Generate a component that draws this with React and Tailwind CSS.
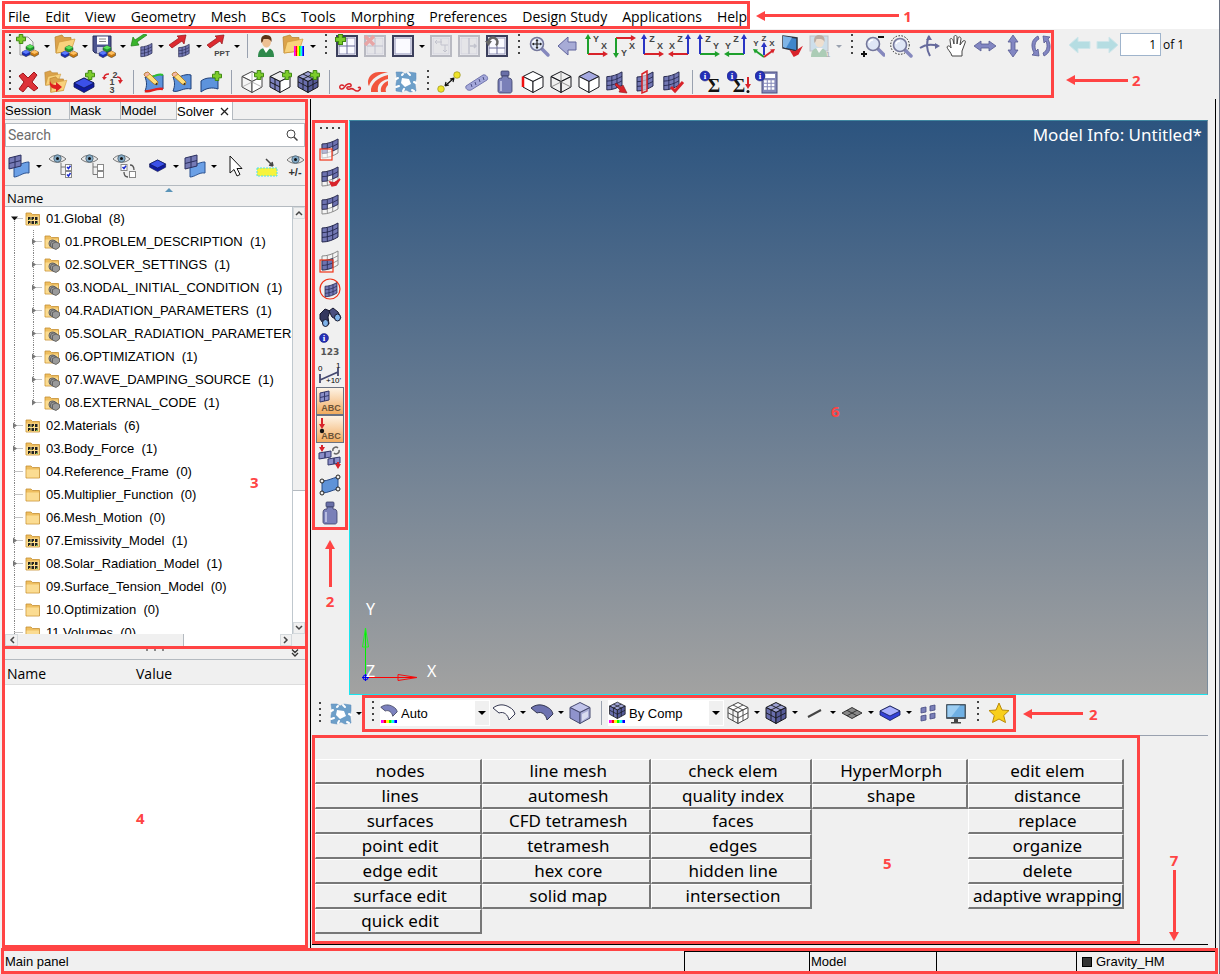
import React from "react";

const MENUS = [
  "File",
  "Edit",
  "View",
  "Geometry",
  "Mesh",
  "BCs",
  "Tools",
  "Morphing",
  "Preferences",
  "Design Study",
  "Applications",
  "Help",
];

const TREE = [
  { name: "01.Global", count: 8, kind: "full", open: true },
  { name: "01.PROBLEM_DESCRIPTION", count: 1, child: true },
  { name: "02.SOLVER_SETTINGS", count: 1, child: true },
  { name: "03.NODAL_INITIAL_CONDITION", count: 1, child: true },
  { name: "04.RADIATION_PARAMETERS", count: 1, child: true },
  { name: "05.SOLAR_RADIATION_PARAMETERS", count: 1, child: true },
  { name: "06.OPTIMIZATION", count: 1, child: true },
  { name: "07.WAVE_DAMPING_SOURCE", count: 1, child: true },
  { name: "08.EXTERNAL_CODE", count: 1, child: true, last: true },
  { name: "02.Materials", count: 6, kind: "full" },
  { name: "03.Body_Force", count: 1, kind: "full" },
  { name: "04.Reference_Frame", count: 0, kind: "empty" },
  { name: "05.Multiplier_Function", count: 0, kind: "empty" },
  { name: "06.Mesh_Motion", count: 0, kind: "empty" },
  { name: "07.Emissivity_Model", count: 1, kind: "full" },
  { name: "08.Solar_Radiation_Model", count: 1, kind: "full" },
  { name: "09.Surface_Tension_Model", count: 0, kind: "empty" },
  { name: "10.Optimization", count: 0, kind: "empty" },
  { name: "11.Volumes", count: 0, kind: "empty" },
];

const PANEL_COLUMNS = [
  ["nodes", "lines", "surfaces", "point edit", "edge edit", "surface edit", "quick edit"],
  ["line mesh", "automesh", "CFD tetramesh", "tetramesh", "hex core", "solid map"],
  ["check elem", "quality index", "faces", "edges", "hidden line", "intersection"],
  ["HyperMorph", "shape"],
  ["edit elem", "distance", "replace", "organize", "delete", "adaptive wrapping"],
];

/* ---------- drawing pieces ---------- */

const Svg = ({ children, className = "" }) => (
  <svg viewBox="0 0 24 24" className={`w-6 h-6 shrink-0 ${className}`} aria-hidden="true">
    {children}
  </svg>
);

const Plus = ({ x = 0, y = 0, s = 1 }) => (
  <path
    transform={`translate(${x} ${y}) scale(${s})`}
    d="M3.2 0.5h3.6v2.7h2.7v3.6h-2.7v2.7h-3.6v-2.7h-2.7v-3.6h2.7z"
    fill="#7ccc2a"
    stroke="#3f8a10"
  />
);

const Brick = ({ x, y, top, side, s = 1 }) => (
  <g transform={`translate(${x} ${y}) scale(${s})`} strokeWidth="0.5">
    <path d="M0 2.5L4 0.5L8 2.5V5L4 7.2L0 5z" fill={side} stroke="#333" />
    <path d="M0 2.5L4 0.5L8 2.5L4 4.6z" fill={top} />
  </g>
);

const Balls = ({ x = 7, y = 10 }) => (
  <g transform={`translate(${x} ${y})`}>
    <Brick x={4} y={0} top="#5be05b" side="#1c9a2c" />
    <Brick x={0} y={5.5} top="#5a7bff" side="#1a2fb8" />
    <Brick x={8.5} y={5.5} top="#ffc061" side="#c97a12" />
  </g>
);

const Folder = ({ x = 0, y = 0, s = 1 }) => (
  <g transform={`translate(${x} ${y}) scale(${s})`}>
    <path d="M1 3L8 1L10 3.5H17V17L2 19z" fill="#dba24a" stroke="#b47d28" strokeWidth="0.7" />
    <path d="M5 8L21 5L17 17L2 19z" fill="#f8d27c" stroke="#cf9838" strokeWidth="0.7" />
  </g>
);

const Sheet = ({ fill = "#7378b4", line = "#23264c", x = 0, y = 0, s = 1 }) => (
  <g transform={`translate(${x} ${y}) scale(${s})`}>
    <path d="M4 7C9 7 15 5 20 2V16C15 19 10 21 4 21z" fill={fill} stroke={line} />
    <path
      d="M4 11.7C9 11.7 15 9.700 20 6.700M4 16.400C9 16.400 15 14.400 20 11.400M9.300 6.500V20.500M14.700 4.600V18.700"
      fill="none"
      stroke={line}
      strokeWidth="0.9"
    />
  </g>
);

// only part of the sheet is shaded, the other cells stay open
const HalfSheet = ({ low }) => (
  <g>
    <Sheet fill="#f4f4f4" line="#8a8a8a" />
    <path
      d={
        low
          ? "M4 11.700C8 11.700 11 10.800 14.700 9.500V18.700C11 20 8 21 4 21z"
          : "M4 7C9 7 15 5 20 2V11.400L14.700 14V9.500L9.300 11.200V16L4 16.400z"
      }
      fill="#6d72b0"
      stroke="#23264c"
      strokeWidth="0.8"
    />
    <path
      d={low ? "M4 16.400C8 16.400 11 15.400 14.700 14M9.300 11.500V20.500" : "M4 11.700L9.300 11.200M14.700 9.500L20 6.700M9.300 6.500V11M14.700 4.600V9.500"}
      stroke="#23264c"
      strokeWidth="0.8"
      fill="none"
    />
  </g>
);

const Surface = ({ fill = "#5d93dc" }) => (
  <path d="M3 7C8 9 14 3 21 5V19C14 17 8 23 3 21C5 16 5 12 3 7z" fill={fill} stroke="#1e3f78" />
);

const Pencil = () => (
  <g>
    <path d="M3 3L6 2L16 12L15 15L12 14L2 5z" fill="#ffe07a" stroke="#a86f14" strokeWidth="0.8" />
    <path d="M2 5L3 3L6 2L8 4L4 7z" fill="#f3b6a8" stroke="#a86f14" strokeWidth="0.5" />
    <path d="M13 14.2L15 12.5L15.2 15z" fill="#222" />
  </g>
);

const Cube = ({ top = "none", left = "none", right = "none", grid, line = "#16171c", children }) => (
  <g stroke={line} strokeLinejoin="round">
    <path d="M12 1.5L22 6.5L12 11.5L2 6.5z" fill={top} />
    <path d="M2 6.5L12 11.5V22.5L2 17z" fill={left} />
    <path d="M22 6.5L12 11.5V22.5L22 17z" fill={right} />
    {grid && (
      <path
        d="M7 4L17 9V19.8M17 4L7 9V19.8M2 11.8L12 17L22 11.8"
        fill="none"
        strokeWidth="0.9"
      />
    )}
    {children}
  </g>
);

const Arrow = ({ x1, y1, x2, y2, c, w = 2, h = 3 }) => {
  const angle = (Math.atan2(y2 - y1, x2 - x1) * 180) / Math.PI;
  const len = Math.hypot(x2 - x1, y2 - y1);
  return (
    <g transform={`translate(${x1} ${y1}) rotate(${angle})`} fill={c}>
      <rect x="0" y={-w / 2} width={len - h} height={w} />
      <path d={`M${len} 0L${len - h * 1.7} ${-h}V${h}z`} />
    </g>
  );
};

const Letter = ({ x, y, children, size = 9, fill = "#444" }) => (
  <text x={x} y={y} fontSize={size} fontWeight="700" fill={fill} textAnchor="middle" fontFamily="Liberation Sans, sans-serif">
    {children}
  </text>
);

const RED = "#d8232a";
const GREEN = "#1ea02c";
const BLUE = "#2a35c4";

const Axes = ({ flip, down, v, vc, h, hc }) => {
  const ox = flip ? 20 : 4;
  const oy = down ? 4 : 20;
  return (
    <Svg>
      <Arrow x1={ox} y1={oy} x2={flip ? 0 : 24} y2={oy} c={hc} />
      <Arrow x1={ox} y1={oy} x2={ox} y2={down ? 24 : 0} c={vc} />
      <Letter x={12} y={down ? 22 : 8}>{v}</Letter>
      <Letter x={flip ? 4 : 20} y={15}>{h}</Letter>
    </Svg>
  );
};

const IsoAxes = () => (
  <Svg>
    <Arrow x1={12} y1={21} x2={12} y2={8} c={BLUE} />
    <Arrow x1={12} y1={23} x2={1} y2={15} c={GREEN} h={2.5} />
    <Arrow x1={12} y1={23} x2={23} y2={15} c={RED} h={2.5} />
    <Letter x={12} y={7} size={8}>Z</Letter>
    <Letter x={4} y={12} size={8}>Y</Letter>
    <Letter x={20} y={12} size={8}>X</Letter>
  </Svg>
);

const Lens = ({ x = 10, y = 10, dashed, children }) => (
  <g>
    {dashed && <circle cx={x} cy={y} r="9.3" fill="none" stroke="#222" strokeDasharray="1.5 1.5" />}
    <path d={`M${x + 5} ${y + 5}L${x + 11} ${y + 11}`} stroke="#8588bd" strokeWidth="3.5" strokeLinecap="round" />
    <circle cx={x} cy={y} r="6.5" fill="#dfe6f6" stroke="#74779b" strokeWidth="1.6" />
    <path d={`M${x - 4} ${y - 1}a4 4 0 0 1 4 -3`} fill="none" stroke="#fff" strokeWidth="1.5" />
    {children}
  </g>
);

const Eye = ({ y = 0 }) => (
  <g transform={`translate(0 ${y})`}>
    <path d="M0 5C4 0 12 0 17 5C12 9.500 5 9.500 0 5z" fill="#e9e9e9" stroke="#777" />
    <circle cx="8.500" cy="4.500" r="3.700" fill="#83a9c4" stroke="#4d6576" strokeWidth="0.8" />
    <circle cx="8.500" cy="4.500" r="1.500" fill="#111" />
  </g>
);

const TreeBoxes = ({ checked, swap }) => (
  <g>
    {!swap && <path d="M12 9V20.500H16M12 13H16" fill="none" stroke="#777" />}
    <rect x={swap ? 8 : 16.5} y="10.500" width="6" height="6" fill="#fff" stroke="#888" />
    <rect x={swap ? 16.5 : 16.5} y="17.500" width="6" height="6" fill="#fff" stroke="#888" />
    {(checked || swap) && <path d={swap ? "M9.500 13l1.500 1.500L13 11.800" : "M18 13l1.500 1.500L21.500 11.800"} stroke="#1c2bd0" strokeWidth="1.500" fill="none" />}
    {checked && <path d="M18 20.500l1.500 1.500L21.500 19" stroke="#1c2bd0" strokeWidth="1.500" fill="none" />}
    {swap && <path d="M17 11c3 0 4 2 4 5M15 23c-3 0-4-2-4-5" stroke="#555" fill="none" strokeWidth="1.300" />}
  </g>
);

const Info = ({ x = 6, y = 6, r = 5 }) => (
  <g>
    <circle cx={x} cy={y} r={r} fill="#2530b8" stroke="#11186e" strokeWidth="0.5" />
    <text x={x} y={y + 3.2} fontSize="9" fontWeight="700" fill="#fff" textAnchor="middle" fontFamily="Liberation Serif, serif">
      i
    </text>
  </g>
);

const Pane = ({ dim, children }) => (
  <g opacity={dim ? 0.3 : 1}>
    <rect x="2" y="2" width="20" height="20" fill="#fff" stroke="#3c3f5c" strokeWidth="2" />
    <rect x="4" y="4" width="16" height="16" fill={dim ? "#cfcfd8" : "#fafaff"} stroke="#8f92b8" />
    {children}
  </g>
);

const Monitor = ({ y = 0 }) => (
  <g transform={`translate(0 ${y})`}>
    <rect x="2" y="2" width="20" height="15" rx="1" fill="#4c5a66" />
    <rect x="3.500" y="3.500" width="17" height="11.500" fill="#6fb0e4" />
    <path d="M3.500 3.500H16L7 15H3.500z" fill="#9ccdf2" />
    <path d="M10 17h4v3h-4zM7 20h10v1.500H7z" fill="#444" />
  </g>
);

const Bottle = () => (
  <g stroke="#3b3f68" strokeWidth="0.8">
    <rect x="8" y="1" width="8" height="5" rx="1" fill="#6a70a8" />
    <path d="M9 6h6v2c3 0 4 1 4 4v9c0 1-1 2-2 2H7c-1 0-2-1-2-2v-9c0-3 1-4 4-4z" fill="#7a80b8" />
    <path d="M8 11v10" stroke="#b8bce0" strokeWidth="2" />
  </g>
);

const Slab = ({ top = "#3b50e8", side = "#0f1aa0", y = 0 }) => (
  <g transform={`translate(0 ${y})`} stroke="#101850" strokeWidth="0.8">
    <path d="M2 12L12 7L22 12V16L12 21.500L2 16z" fill={side} />
    <path d="M2 12L12 7L22 12L12 17z" fill={top} />
  </g>
);

const Person = ({ x = 0 }) => (
  <g transform={`translate(${x} 0)`}>
    <path d="M4 23C4 15 8 14 12 14C17 14 20 16 20 23z" fill="#2f8a4c" />
    <path d="M9 14l3 5 4-5z" fill="#fff" />
    <ellipse cx="12.500" cy="7.500" rx="4.500" ry="6" fill="#edc093" />
    <path d="M7.500 9C6 3 9 1 12 1C17 1 18 4 17.500 8C16 4 12 5 9.500 5C9 7 8.500 8 7.500 9z" fill="#5b3417" />
  </g>
);

const Splat = () => (
  <g>
    <path d="M2 2h6l3 2 4-2 7 1v6l-1 4 1 8-6 1-4-2-4 2-6-1v-7l1-5z" fill="#6d9fc9" stroke="#5a8bb8" strokeWidth="0.5" />
    <path d="M8 8l7 1 2 5-6 3-4-4z" fill="#fff" />
    <path d="M2 9l2-1M14 3l2 2M20 12l2 1M9 21l1-2M2 17l3-1M18 20l2 1M9 4l-1 1" stroke="#fff" strokeWidth="2" strokeLinecap="round" />
  </g>
);

const Rainbow = ({ x, y, w = 16, h = 4 }) => (
  <g>
    {["#f0f", "#f00", "#ff0", "#0f0", "#0ff", "#00f"].map((c, i) => (
      <rect key={c} x={x + (i * w) / 6} y={y} width={w / 6} height={h} fill={c} />
    ))}
  </g>
);

const Curved = ({ fill = "#7d82bf" }) => (
  <path d="M1 7C6 3 12 3 17 6C21 8 22 10 23 13L17 19C16 14 12 10 7 12z" fill={fill} stroke="#333650" strokeLinejoin="round" />
);

const Sigma = ({ x = 13 }) => (
  <text x={x} y="22" fontSize="19" fontWeight="700" textAnchor="middle" fill="#111" fontFamily="Liberation Serif, serif">
    Σ
  </text>
);

/* ---------- toolbar parts ---------- */

const ToolButton = ({ label, children, cell = "w-7", active }) => (
  <button
    aria-label={label}
    title={label}
    className={`${cell} h-7 shrink-0 flex items-center justify-center ${
      active ? "bg-gradient-to-b from-[#fdf3e4] to-[#f0ab5c] border border-gray-500" : ""
    }`}
  >
    {children}
  </button>
);

const Drop = ({ dim, cell = "w-2.5" }) => (
  <button aria-label="More options" className={`${cell} h-7 shrink-0 overflow-hidden flex items-center justify-center`}>
    <span
      className={`border-x-[3px] border-x-transparent border-t-[3px] ${dim ? "border-t-gray-400" : "border-t-black"}`}
    />
  </button>
);

const Grip = ({ cell = "w-[15px]" }) => (
  <span className={`${cell} h-6 shrink-0 flex justify-center`}>
    <span className="w-0.5 h-[22px] bg-[repeating-linear-gradient(to_bottom,#444_0px,#444_2px,transparent_2px,transparent_6px)]" />
  </span>
);

const Sep = ({ cell = "w-3.5" }) => (
  <span className={`${cell} h-7 shrink-0 flex justify-center`}>
    <span className="w-px h-6 mt-0.5 bg-gray-400" />
  </span>
);

const ArrowLeft = ({ size }) => (
  <span className={`${size} flex items-center shrink-0`}>
    <span className="border-y-[5px] border-y-transparent border-r-[9px] border-r-[#ff4444]" />
    <span className="grow h-[3px] bg-[#ff4444]" />
  </span>
);

const Mark = ({ children, className = "" }) => (
  <span className={`font-['Noto_Sans'] font-bold text-[15px] leading-5 text-[#ff4444] ${className}`}>{children}</span>
);

const FRAME = "border-[3px] border-[#ff4444]";

const MenuBar = () => (
  <header className="bg-white h-[29px] pl-0.5 flex items-center shrink-0">
    <nav className={`${FRAME} h-7 pl-[3px] pt-1 flex items-center gap-[15px] font-['Open_Sans'] text-sm text-black`}>
      {MENUS.map((menu) => (
        <button key={menu}>{menu}</button>
      ))}
    </nav>
    <span className="pl-1.5 pt-0.5 flex items-center gap-1">
      <ArrowLeft size="w-[143px]" />
      <Mark>1</Mark>
    </span>
  </header>
);

const FileTools = () => (
  <div className="flex items-center h-[26px]">
    <Grip cell="w-[9px]" />
    <ToolButton label="New">
      <Svg>
        <path d="M4 3H12L17 8V21H4z" fill="#f3f3f3" stroke="#999" />
        <Plus x={0} y={0} />
        <Balls x={6} y={10} />
      </Svg>
    </ToolButton>
    <Drop />
    <ToolButton label="Open">
      <Svg>
        <Folder />
        <Balls x={7} y={11} />
      </Svg>
    </ToolButton>
    <Drop />
    <ToolButton label="Save">
      <Svg>
        <path d="M1 2H19V19H3L1 17z" fill="#4c5590" stroke="#2a2f5c" />
        <rect x="5" y="2.500" width="11" height="8" fill="#fff" />
        <path d="M7 5h7M7 7.500h7" stroke="#888" />
        <rect x="5" y="13" width="9" height="6" fill="#c9cce2" />
        <Balls x={7} y={11} />
      </Svg>
    </ToolButton>
    <Drop />
    <ToolButton label="Import">
      <Svg>
        <Sheet x={8} y={8} s={0.7} />
        <path d="M17 1L7 8L9 11L1 12L3 3L5 6L14 0z" fill="#39b42c" stroke="#1c7a14" strokeWidth="0.7" />
      </Svg>
    </ToolButton>
    <Drop />
    <ToolButton label="Export">
      <Svg>
        <Sheet x={8} y={9} s={0.66} />
        <path d="M1 11L11 4L9 2L18 1L16 10L14 7L4 14z" fill="#dd2a30" stroke="#931218" strokeWidth="0.7" />
      </Svg>
    </ToolButton>
    <Drop />
    <ToolButton label="Export to PPT">
      <Svg>
        <path d="M1 11L11 4L9 2L18 1L16 10L14 7L4 14z" fill="#dd2a30" stroke="#931218" strokeWidth="0.7" />
        <Letter x={16} y={22} size={8}>PPT</Letter>
      </Svg>
    </ToolButton>
    <Drop />
    <Sep cell="w-2.5" />
    <ToolButton label="User profile">
      <Svg>
        <Person />
      </Svg>
    </ToolButton>
    <ToolButton label="Load results">
      <Svg>
        <Folder />
        <Rainbow x={12} y={12} w={10} h={10} />
      </Svg>
    </ToolButton>
    <Drop />
    <Grip />
    <ToolButton label="Add page">
      <Svg>
        <Pane>
          <path d="M12 4V20M4 12H20" stroke="#6a6d98" />
        </Pane>
        <Plus x={0} y={0} s={1.100} />
      </Svg>
    </ToolButton>
    <ToolButton label="Delete page">
      <Svg>
        <Pane dim>
          <path d="M12 4V20M4 12H20" stroke="#4a4d78" />
        </Pane>
        <path d="M2 2l9 9M11 2l-9 9" stroke="#e8a5a5" strokeWidth="3.500" />
      </Svg>
    </ToolButton>
    <ToolButton label="Window layout">
      <Svg>
        <Pane />
      </Svg>
    </ToolButton>
    <Drop />
    <ToolButton label="Swap windows">
      <Svg>
        <Pane dim>
          <path d="M6 8h7M8 6l-2 2 2 2M16 11v7M14 16l2 2 2-2M12 5v6h7" fill="none" stroke="#5a5d80" />
        </Pane>
      </Svg>
    </ToolButton>
    <ToolButton label="Expand window">
      <Svg>
        <Pane dim>
          <path d="M12 4v16M13 12h6M17 10l2 2-2 2" fill="none" stroke="#5a5d80" strokeWidth="1.500" />
        </Pane>
      </Svg>
    </ToolButton>
    <ToolButton label="Reload page">
      <Svg>
        <Pane>
          <path d="M12 12V20M4 14H20" stroke="#6a6d98" />
        </Pane>
        <path d="M3.500 8a4.500 4.500 0 1 1 7.500 3.500" fill="none" stroke="#666" strokeWidth="2.500" />
        <path d="M0 7h7l-3.500 5z" fill="#666" />
      </Svg>
    </ToolButton>
    <Grip />
    <ToolButton label="Fit model">
      <Svg>
        <Lens x={9} y={10}>
          <path d="M9 5.500v9M4.500 10h9" stroke="#222" fill="none" strokeWidth="1.200" />
          <path d="M7.500 7L9 5l1.500 2zM7.500 13L9 15l1.500-2zM6 8.500L4 10l2 1.500zM12 8.500L14 10l-2 1.500z" fill="#222" />
        </Lens>
      </Svg>
    </ToolButton>
    <ToolButton label="Previous view">
      <Svg>
        <path d="M2 12L12 3V8H20V16H12V21z" fill="#a7abd6" stroke="#60649c" />
      </Svg>
    </ToolButton>
    <ToolButton label="XY top view">
      <Axes v="Y" vc={GREEN} h="X" hc={RED} />
    </ToolButton>
    <ToolButton label="XY bottom view">
      <Axes down v="Y" vc={GREEN} h="X" hc={RED} />
    </ToolButton>
    <ToolButton label="XZ left view">
      <Axes v="Z" vc={BLUE} h="X" hc={RED} />
    </ToolButton>
    <ToolButton label="XZ right view">
      <Axes flip v="Z" vc={BLUE} h="X" hc={RED} />
    </ToolButton>
    <ToolButton label="YZ rear view">
      <Axes v="Z" vc={BLUE} h="Y" hc={GREEN} />
    </ToolButton>
    <ToolButton label="YZ front view">
      <Axes flip v="Z" vc={BLUE} h="Y" hc={GREEN} />
    </ToolButton>
    <ToolButton label="Isometric view">
      <IsoAxes />
    </ToolButton>
    <ToolButton label="Reverse view">
      <Svg>
        <path d="M3 2L17 4V17L3 14z" fill="#3f86cc" stroke="#2e3440" strokeWidth="1.500" />
        <path d="M3 2L12 3.500L6 14L3 13z" fill="#7fb4e6" />
        <path d="M11 17l4 1 6-4-3 6-4 2z" fill={RED} stroke={RED} strokeWidth="1.500" />
      </Svg>
    </ToolButton>
    <ToolButton label="Saved views">
      <Svg>
        <g opacity="0.35">
          <rect x="2" y="2" width="18" height="15" fill="#8fbfe0" stroke="#667" />
          <Person x={-1} />
          <Letter x={20} y={23} size={8}>1</Letter>
        </g>
      </Svg>
    </ToolButton>
    <Drop dim />
    <Grip />
    <ToolButton label="Zoom in or out">
      <Svg>
        <Lens x={12} y={10} />
        <path d="M17 3h6M0 20h6M3 17v6" stroke="#111" strokeWidth="2" />
      </Svg>
    </ToolButton>
    <ToolButton label="Circle zoom">
      <Svg>
        <Lens x={11} y={11} dashed />
      </Svg>
    </ToolButton>
    <ToolButton label="Rotate">
      <Svg>
        <path d="M12 2C9 9 9 15 13 22M3 14C9 10 15 10 21 12" fill="none" stroke="#666a9c" strokeWidth="2" />
        <path d="M9 6l3-5 3 5zM18 9l5 3-5 3z" fill="#666a9c" />
      </Svg>
    </ToolButton>
    <ToolButton label="Pan">
      <Svg>
        <path
          d="M7 22C6 18 2 15 2 13C3 11 5 12 6 14L5 6C5 4 7 4 8 6L9 10V3C9 1 12 1 12 3V10L13 4C14 2 16 3 16 5L15 11L18 7C20 6 21 7 20 9L17 17V22z"
          fill="#fff"
          stroke="#444"
          strokeLinejoin="round"
        />
      </Svg>
    </ToolButton>
    <ToolButton label="Pan left or right">
      <Svg>
        <path d="M1 12l7-5v3h8V7l7 5-7 5v-3H8v3z" fill="#8286c2" stroke="#565a92" strokeWidth="0.800" />
      </Svg>
    </ToolButton>
    <ToolButton label="Pan up or down">
      <Svg>
        <path d="M12 1l5 7h-3v8h3l-5 7-5-7h3V8H7z" fill="#8286c2" stroke="#565a92" strokeWidth="0.800" />
      </Svg>
    </ToolButton>
    <ToolButton label="Rotate about axis">
      <Svg>
        <path d="M9 2C3 5 1 11 5 19L3 21L10 22L9 15L7 17C5 12 6 7 10 5z" fill="#8286c2" stroke="#565a92" strokeWidth="0.800" />
        <path d="M15 22C21 19 23 13 19 5L21 3L14 2L15 9L17 7C19 12 18 17 14 19z" fill="#8286c2" stroke="#565a92" strokeWidth="0.800" />
      </Svg>
    </ToolButton>
  </div>
);

const ModelTools = () => (
  <div className="flex items-center h-[26px]">
    <Grip cell="w-[9px]" />
    <ToolButton label="Delete">
      <Svg>
        <path d="M3 6L7 3L12 8L18 2L21 5L16 12L22 18L18 21L12 16L7 22L3 19L8 12z" fill="#dd3238" stroke="#a0151b" />
      </Svg>
    </ToolButton>
    <ToolButton label="Move to collector">
      <Svg>
        <Folder s={0.8} />
        <Folder x={5} y={6} s={0.850} />
        <path d="M6 11c1 3 3 4 6 4v-3l6 5-6 5v-3c-5 0-7-4-6-8z" fill="#e02020" />
      </Svg>
    </ToolButton>
    <ToolButton label="Create component">
      <Svg>
        <Slab y={1} />
        <Plus x={13} y={0} />
      </Svg>
    </ToolButton>
    <ToolButton label="Renumber">
      <Svg>
        <Letter x={15} y={8}>2</Letter>
        <Letter x={12} y={15}>1</Letter>
        <Letter x={12} y={23}>3</Letter>
        <path d="M4 8c0-3 2-4 5-4M17 7c3 0 4 2 4 4" stroke={RED} fill="none" strokeWidth="1.500" />
        <path d="M2 7h5l-3 3zM18 10h5l-3 4z" fill={RED} />
      </Svg>
    </ToolButton>
    <Sep />
    <ToolButton label="Edit edges">
      <Svg>
        <Surface />
        <path d="M8 7C13 7 16 3 21 5" fill="none" stroke="#30c030" strokeWidth="2" />
        <path d="M3 21C8 23 14 17 21 19" fill="none" stroke="#e02020" strokeWidth="2.500" />
        <Pencil />
      </Svg>
    </ToolButton>
    <ToolButton label="Edit surfaces">
      <Svg>
        <Surface />
        <Pencil />
      </Svg>
    </ToolButton>
    <ToolButton label="Create surface">
      <Svg>
        <path d="M3 11C8 7 14 8 20 8V19C14 17 8 18 3 22z" fill="#5d93dc" stroke="#1e3f78" />
        <Plus x={14} y={1} />
      </Svg>
    </ToolButton>
    <Sep />
    <ToolButton label="Create solid">
      <Svg>
        <Cube top="#fff" left="#f4f4f4" right="#fff" line="#444" />
        <path d="M12 12V2M12 12L2 17M12 12L22 17" stroke="#999" strokeWidth="0.700" />
        <Plus x={14} y={0} s={1} />
      </Svg>
    </ToolButton>
    <ToolButton label="Solid edit">
      <Svg>
        <Cube top="#eee" left="#7d82bf" right="#fff" />
        <path d="M7 9V20M2 12L12 17" stroke="#16171c" />
        <Plus x={14} y={0} s={1} />
      </Svg>
    </ToolButton>
    <ToolButton label="Mesh solid">
      <Svg>
        <Cube top="#9da1d3" left="#6a6fae" right="#565b98" grid />
        <Plus x={14} y={0} s={1} />
      </Svg>
    </ToolButton>
    <Sep />
    <ToolButton label="Curve">
      <Svg>
        <path
          d="M6 16C3 13 0 17 3 19C7 20 6 15 10 14C14 13 14 17 11 17C8 16 8 20 12 19C16 17 16 22 20 21C24 19 22 16 20 18"
          fill="none"
          stroke="#d8232a"
          strokeWidth="1.500"
        />
      </Svg>
    </ToolButton>
    <ToolButton label="Contours">
      <Svg>
        <path d="M2 11C3 5 8 2 13 2H22C12 4 5 9 3 16C2 15 2 13 2 11z" fill="#f2553d" />
        <path d="M5 22C4 14 12 7 22 5V9C14 11 11 15 12 22zM15 22C14 17 17 13 22 11V15C20 17 19 19 20 22z" fill="#f2553d" />
      </Svg>
    </ToolButton>
    <ToolButton label="Mesh cleanup">
      <Svg>
        <Splat />
      </Svg>
    </ToolButton>
    <Grip />
    <ToolButton label="Distance">
      <Svg>
        <path d="M8 16L17 8M8 16l1-4M8 16l4-1M17 8l-4 1M17 8l-1 4" stroke="#111" fill="none" strokeWidth="1.200" />
        <circle cx="4" cy="19" r="3.300" fill="#eee32a" stroke="#8a8310" strokeWidth="0.600" />
        <circle cx="20" cy="5" r="3.300" fill="#eee32a" stroke="#8a8310" strokeWidth="0.600" />
      </Svg>
    </ToolButton>
    <ToolButton label="Ruler">
      <Svg>
        <path d="M1 16L18 5C21 4 24 8 22 10L6 20C3 21 0 19 1 16z" fill="#a4a8da" stroke="#7276ae" />
        <path d="M6 14l1 3M10 12l1 3M14 9l1 3M18 7l1 3" stroke="#4a4e84" />
      </Svg>
    </ToolButton>
    <ToolButton label="Mass">
      <Svg>
        <Bottle />
      </Svg>
    </ToolButton>
    <ToolButton label="Free edges">
      <Svg>
        <Cube top="#fff" left="#fff" right="#fff" />
        <path d="M2 6.500V17" stroke="#f01010" strokeWidth="2.500" />
      </Svg>
    </ToolButton>
    <ToolButton label="Wireframe">
      <Svg>
        <Cube>
          <path d="M12 1.500V12M2 17L12 12L22 17" fill="none" stroke="#777" strokeWidth="0.800" />
        </Cube>
      </Svg>
    </ToolButton>
    <ToolButton label="Top face">
      <Svg>
        <Cube top="#a5a9e0" left="#fff" right="#fff" />
      </Svg>
    </ToolButton>
    <ToolButton label="Export mesh">
      <Svg>
        <Sheet x={-2} s={0.950} />
        <path d="M11 13l5 4 2-2 4 8-8-1 1-2-5-5z" fill={RED} stroke="#8e1014" strokeWidth="0.600" />
      </Svg>
    </ToolButton>
    <ToolButton label="Split mesh">
      <Svg>
        <Sheet />
        <path d="M9 4l5-3v20l-5 2z" fill="#f6e8e8" fillOpacity="0.600" stroke={RED} strokeWidth="1.500" />
      </Svg>
    </ToolButton>
    <ToolButton label="Check mesh">
      <Svg>
        <Sheet x={-1} s={0.950} />
        <path d="M10 17l4 4 8-9" fill="none" stroke={RED} strokeWidth="3" />
      </Svg>
    </ToolButton>
    <Sep cell="w-2.5" />
    <ToolButton label="Summary">
      <Svg>
        <Sigma x={15} />
        <Info x={6} y={6} />
      </Svg>
    </ToolButton>
    <ToolButton label="Load summary">
      <Svg>
        <Sigma x={12} />
        <Info x={5} y={6} />
        <Arrow x1={21} y1={7} x2={21} y2={19} c={RED} />
        <circle cx="21" cy="21.500" r="1.500" fill="#111" />
      </Svg>
    </ToolButton>
    <ToolButton label="Calculator">
      <Svg>
        <rect x="7" y="2" width="15" height="21" fill="#8488b8" stroke="#4c5080" />
        <rect x="10" y="4" width="10" height="4" fill="#fff" />
        <path d="M9 11.500h11M9 15h11M9 18.500h11" stroke="#fff" strokeWidth="2.500" strokeDasharray="2.800 1" />
        <Info x={5} y={6} />
      </Svg>
    </ToolButton>
  </div>
);

const Pager = () => (
  <div className="pl-3 pt-[3px] flex flex-col gap-1.5">
    <div className="flex items-center h-[23px]">
      {[false, true].map((next) => (
        <button key={String(next)} aria-label={next ? "Next page" : "Previous page"} className="w-[27px] flex justify-center">
          <svg viewBox="0 0 24 24" className={next ? "w-6 h-6 rotate-180" : "w-6 h-6"}>
            <path d="M1 12L10 4V8.500H22V15.500H10V20z" fill="#b5dde2" stroke="#cfe6ea" />
          </svg>
        </button>
      ))}
      <input
        aria-label="Page"
        defaultValue="1"
        className="w-[41px] h-[23px] px-1 text-right bg-white border border-[#9fb4cc] text-xs font-['Open_Sans']"
      />
      <span className="pl-0.5 text-xs font-['Open_Sans']">of 1</span>
    </div>
    <div className="h-9 flex items-center gap-1">
      <ArrowLeft size="w-[62px]" />
      <Mark>2</Mark>
    </div>
  </div>
);

/* ---------- solver browser ---------- */

const BrowserTools = () => (
  <div className="flex items-center h-[38px] overflow-hidden shrink-0">
    <ToolButton label="Select components">
      <ShowMesh />
    </ToolButton>
    <Drop cell="w-3" />
    <ToolButton label="Show all" cell="w-8">
      <Svg>
        <Eye />
        <TreeBoxes checked />
      </Svg>
    </ToolButton>
    <ToolButton label="Hide all" cell="w-8">
      <Svg>
        <Eye />
        <TreeBoxes />
      </Svg>
    </ToolButton>
    <ToolButton label="Reverse all" cell="w-8">
      <Svg>
        <Eye />
        <TreeBoxes swap />
      </Svg>
    </ToolButton>
    <span className="w-0.5 shrink-0" />
    <ToolButton label="Component">
      <Svg>
        <g transform="translate(3 2) scale(0.800)">
          <Slab y={-2} />
        </g>
      </Svg>
    </ToolButton>
    <Drop />
    <ToolButton label="Elements and geometry">
      <ShowMesh />
    </ToolButton>
    <Drop />
    <ToolButton label="Selector" cell="w-8">
      <Svg>
        <path d="M7 2V19L11 15.500L14 22L17 20.500L14 14.500H19z" fill="#fff" stroke="#111" />
      </Svg>
    </ToolButton>
    <ToolButton label="Highlight" cell="w-8">
      <Svg>
        <rect x="2" y="14" width="20" height="8" fill="#f7f33c" stroke="#4fe0e8" strokeDasharray="2 1" />
        <path d="M11 5l7 7M18 12l-4-1M18 12l-1-4" stroke="#444" fill="none" strokeWidth="1.500" />
      </Svg>
    </ToolButton>
    <ToolButton label="Show or hide" cell="w-8">
      <Svg>
        <Eye y={1} />
        <text x="8" y="22" fontSize="11" fontWeight="700" textAnchor="middle" fill="#333" fontFamily="Liberation Sans, sans-serif">
          +/-
        </text>
      </Svg>
    </ToolButton>
  </div>
);

const ShowMesh = () => (
  <Svg>
    <path d="M7 11C12 12 16 8 22 8V19C16 18 12 23 7 23z" fill="#6ba0e6" stroke="#285091" />
    <path d="M2 4L14 1V12L2 15z" fill="#757ab5" stroke="#2b2f5e" />
    <path d="M8 2.500V13.500M2 9.500L14 6.500" stroke="#2b2f5e" />
  </Svg>
);

const Branch = ({ arrow, first, last }) => (
  <svg viewBox="0 0 12 23" className="w-3 h-full shrink-0" aria-hidden="true">
    <path
      d={`M3.500 ${first ? 12 : 0}V${last ? 12 : 23}M3.500 11.500H12`}
      stroke="#888"
      strokeDasharray="1 1"
      fill="none"
    />
    {arrow === "down" && <path d="M0 9.500h7l-3.500 4z" fill="#111" />}
    {arrow === "right" && <path d="M2 8.500l4 3-4 3z" fill="#777" />}
  </svg>
);

const NodeIcon = ({ kind }) => (
  <svg viewBox="0 0 16 16" className="w-4 h-4 shrink-0" aria-hidden="true">
    <path d="M1 2h5l1.500 1.500H14.500V14H1z" fill="#efbf60" stroke="#c58f34" strokeWidth="0.800" />
    <path d="M1.500 5.500h12.500v8h-12.500z" fill="#fbdc92" />
    {kind === "full" && (
      <g>
        <path d="M3 7.500h10M3 11.500h10" stroke="#222" strokeWidth="3" strokeDasharray="2.500 1" />
        <path d="M4 8.500h1.500M11 12.500h1.500" stroke="#6cc24a" />
        <path d="M8 8.500h1.500M4 12.500h1.500" stroke="#ffd23a" />
      </g>
    )}
    {!kind && (
      <g fill="#9a9a9a" stroke="#555" strokeWidth="0.800">
        <rect x="5" y="6" width="7" height="7" rx="3" />
        <rect x="6.500" y="7" width="7" height="7" rx="3" />
        <path d="M8.500 9.500L12 8l3.500 1.500V13L12 15.500 8.500 14z" />
      </g>
    )}
  </svg>
);

const TreeRow = ({ item, first }) => {
  const hasChildren = item.child || item.kind === "full";
  return (
    <li className="flex items-center h-[23px] pl-1.5 whitespace-pre">
      {item.child && (
        <svg viewBox="0 0 19 23" className="w-[19px] h-full shrink-0" aria-hidden="true">
          <path d="M3.500 0V23" stroke="#888" strokeDasharray="1 1" />
        </svg>
      )}
      <Branch arrow={item.open ? "down" : hasChildren ? "right" : null} first={first} last={item.last} />
      <span className="pl-0.5 pr-[5px]">
        <NodeIcon kind={item.kind} />
      </span>
      {`${item.name}  (${item.count})`}
    </li>
  );
};

const ScrollArrow = ({ d, className }) => (
  <button aria-label="Scroll" className={`flex items-center justify-center shrink-0 bg-[#f0f0f0] border border-[#d5dadd] ${className}`}>
    <svg viewBox="0 0 8 8" className="w-2 h-2">
      <path d={d} fill="none" stroke="#444" strokeWidth="1.500" />
    </svg>
  </button>
);

const SolverBrowser = () => (
  <section className={`${FRAME} relative flex-1 min-h-0 flex flex-col text-[13px] font-['Liberation_Sans'] text-black`}>
    <div className="flex h-[18px] shrink-0 border-b border-[#b4bac0] leading-[17px]">
      <button className="w-[65px] text-left border-r border-[#b4bac0]">Session</button>
      <button className="w-[51px] text-left border-r border-[#b4bac0]">Mask</button>
      <button className="w-[56px] text-left border-r border-[#b4bac0]">Model</button>
      <button className="w-[56px] h-[18px] text-left bg-white border-r border-[#b4bac0] flex items-center justify-between pr-[3px]">
        Solver
        <svg viewBox="0 0 9 9" className="w-[9px] h-[9px]">
          <path d="M1 1l7 7M8 1l-7 7" stroke="#222" strokeWidth="1.300" />
        </svg>
      </button>
    </div>
    <div className="mt-[3px] h-6 shrink-0 flex items-center bg-white border border-[#b4bac0] pl-0.5 pr-1.5">
      <input
        aria-label="Search"
        placeholder="Search"
        className="grow min-w-0 bg-transparent outline-none placeholder:text-[#6d6d6d] font-['Roboto'] text-sm"
      />
      <svg viewBox="0 0 12 12" className="w-3 h-3">
        <circle cx="5" cy="5" r="4" fill="none" stroke="#444" />
        <path d="M8 8l3.500 3.500" stroke="#444" strokeWidth="1.500" />
      </svg>
    </div>
    <BrowserTools />
    <div className="h-[22px] shrink-0 relative border-y border-[#b4bac0] pt-0.5 pl-0.5 font-['Open_Sans'] text-[13px] leading-5">
      Name
      <svg viewBox="0 0 8 4" className="absolute left-[160px] top-0.5 w-2 h-1">
        <path d="M0 4L4 0L8 4z" fill="#5a94b8" />
      </svg>
    </div>
    <div className="flex flex-1 min-h-0 bg-white">
      <ul className="flex-1 min-w-0 overflow-hidden">
        {TREE.map((item, i) => (
          <TreeRow key={item.name} item={item} first={i === 0} />
        ))}
      </ul>
      <div className="w-[13px] shrink-0 flex flex-col border-l border-[#c0c8ce]">
        <ScrollArrow className="h-3" d="M1 6l3-3 3 3" />
        <div className="h-[272px] bg-[#f0f0f0] border-b border-[#b4bac0]" />
        <div className="grow" />
        <ScrollArrow className="h-3" d="M1 2l3 3 3-3" />
      </div>
    </div>
    <div className="h-3 shrink-0 flex bg-white">
      <ScrollArrow className="w-[13px]" d="M6 1l-3 3 3 3" />
      <div className="w-[166px] bg-[#f0f0f0] border-r border-[#b4bac0]" />
      <div className="grow" />
      <ScrollArrow className="w-3" d="M2 1l3 3-3 3" />
      <div className="w-[13px] bg-[#f0f0f0]" />
    </div>
    <Mark className="absolute left-[245px] top-[370px]">3</Mark>
  </section>
);

const EntityEditor = () => (
  <section className={`${FRAME} relative -mt-[3px] h-[302px] shrink-0 flex flex-col font-['Open_Sans'] text-sm`}>
    <div className="relative h-[11px] shrink-0 flex justify-center border-b border-[#b4bac0]">
      <span className="w-[18px] h-0.5 bg-[repeating-linear-gradient(to_right,#888_0px,#888_2px,transparent_2px,transparent_8px)]" />
      <svg viewBox="0 0 8 8" className="absolute right-1.5 top-0 w-2 h-2">
        <path d="M1 0.500l3 3 3-3M1 4l3 3 3-3" fill="none" stroke="#333" strokeWidth="1.300" />
      </svg>
    </div>
    <div className="h-[25px] shrink-0 flex items-end pl-0.5 border-b border-[#ddd]">
      <span className="w-[129px]">Name</span>
      <span>Value</span>
    </div>
    <div className="grow bg-white" />
    <Mark className="absolute left-[131px] top-[159px]">4</Mark>
  </section>
);

/* ---------- display tools beside the model ---------- */

const DisplayTools = () => (
  <div className="w-9 shrink-0 flex flex-col items-center">
    <div className={`${FRAME} w-9 flex flex-col items-center`}>
      <span className="h-3 flex items-start pt-1">
        <span className="w-5 h-0.5 bg-[repeating-linear-gradient(to_right,#444_0px,#444_2px,transparent_2px,transparent_6px)]" />
      </span>
      <ToolButton label="Mask">
        <Svg>
          <HalfSheet />
          <rect x="2" y="12" width="12" height="11" fill="#fff" fillOpacity="0.500" stroke="#f03418" strokeWidth="1.200" />
        </Svg>
      </ToolButton>
      <ToolButton label="Reverse mask">
        <Svg>
          <HalfSheet />
          <path d="M12 17l4 1 6-4-4 6-4 1z" fill={RED} stroke={RED} strokeWidth="1.500" />
        </Svg>
      </ToolButton>
      <ToolButton label="Unmask adjacent">
        <Svg>
          <HalfSheet />
        </Svg>
      </ToolButton>
      <ToolButton label="Unmask all">
        <Svg>
          <Sheet />
        </Svg>
      </ToolButton>
      <ToolButton label="Mask not shown">
        <Svg>
          <HalfSheet low />
          <rect x="2" y="11" width="13" height="12" fill="none" stroke="#f03418" strokeWidth="1.200" />
        </Svg>
      </ToolButton>
      <ToolButton label="Spherical clipping">
        <Svg>
          <Sheet x={4} y={4} s={0.750} />
          <circle cx="12" cy="12" r="10" fill="none" stroke="#f03418" strokeWidth="1.200" />
        </Svg>
      </ToolButton>
      <ToolButton label="Find">
        <Svg>
          <path d="M2 9L7 4L12 6L10 12L11 19L7 21L2 14z" fill="#34385e" stroke="#15172c" />
          <path d="M11 6L15 3L20 7L23 13L19 15L14 12z" fill="#4a4f80" stroke="#15172c" />
          <ellipse cx="7.500" cy="18" rx="3" ry="3.500" fill="#7eb2ea" stroke="#15172c" />
          <ellipse cx="19.500" cy="12.500" rx="3" ry="3.500" fill="#7eb2ea" stroke="#15172c" />
        </Svg>
      </ToolButton>
      <ToolButton label="Numbers">
        <Svg>
          <Info x={6} y={5} r={4.500} />
          <text x="12" y="22" fontSize="9" fontWeight="700" textAnchor="middle" fill="#555" fontFamily="DejaVu Sans, sans-serif">
            123
          </text>
        </Svg>
      </ToolButton>
      <ToolButton label="Scale">
        <Svg>
          <path d="M2 13v9M20 7v8M2 19L20 11" stroke="#44486e" strokeWidth="1.800" />
          <text x="0" y="10" fontSize="8" fontFamily="Liberation Sans, sans-serif">0</text>
          <text x="18" y="7" fontSize="8" fontFamily="Liberation Sans, sans-serif">1</text>
          <text x="8" y="22" fontSize="8" fontFamily="Liberation Sans, sans-serif">+10&apos;</text>
        </Svg>
      </ToolButton>
      <ToolButton label="Element handles" active>
        <Svg>
          <path d="M2 4L11 2V11L2 13z" fill="#8a8ec8" stroke="#33376a" />
          <path d="M6.500 3V12M2 8.500L11 6.500" stroke="#33376a" />
          <Letter x={13} y={22} size={9} fill="#6b5338">ABC</Letter>
        </Svg>
      </ToolButton>
      <ToolButton label="Load handles" active>
        <Svg>
          <Arrow x1={4} y1={1} x2={4} y2={12} c={RED} />
          <circle cx="4" cy="14" r="2.200" fill="#111" />
          <Letter x={13} y={22} size={9} fill="#6b5338">ABC</Letter>
        </Svg>
      </ToolButton>
      <ToolButton label="Local systems">
        <Svg>
          <path d="M1 8l6-1v6l-6 1zM7 7l6-1v6l-6 1zM10 14l6-1v6l-6 1zM16 13l6-1v6l-6 1z" fill="#8a8ec8" stroke="#33376a" />
          <Arrow x1={4} y1={0} x2={4} y2={7} c={RED} />
          <Arrow x1={20} y1={17} x2={20} y2={24} c={RED} />
          <path d="M15 6a3 3 0 0 1 5-3M21 5a3 3 0 0 1-5 3" fill="none" stroke="#666" strokeWidth="1.500" />
        </Svg>
      </ToolButton>
      <ToolButton label="Surface vertices">
        <Svg>
          <path d="M4 8C10 8 14 5 20 4V16C14 17 10 20 4 20z" fill="#5f93d8" stroke="#274a86" />
          <g fill="#eee" stroke="#222">
            <circle cx="4" cy="8" r="2" />
            <circle cx="20" cy="4" r="2" />
            <circle cx="20" cy="16" r="2" />
            <circle cx="4" cy="20" r="2" />
          </g>
        </Svg>
      </ToolButton>
      <ToolButton label="Material">
        <Svg>
          <Bottle />
        </Svg>
      </ToolButton>
    </div>
    <span className="mt-2.5 border-x-[5px] border-x-transparent border-b-[9px] border-b-[#ff4444]" />
    <span className="w-[3px] h-[38px] bg-[#ff4444]" />
    <Mark className="mt-1">2</Mark>
  </div>
);

const GraphicsArea = () => (
  <main className="relative flex-1 ml-px border border-[#19e6f0] border-t-[#3f86a0] border-r-[#7a8c9c] bg-gradient-to-b from-[#2c547f] to-[#a2a2a1] font-['Noto_Sans'] text-white">
    <p className="text-right text-[17px] leading-6 pr-[5px] pt-0.5">Model Info: Untitled*</p>
    <Mark className="absolute left-[481px] top-[280px]">6</Mark>
    <svg viewBox="0 0 100 100" className="absolute left-0 bottom-0 w-[100px] h-[100px]" aria-hidden="true">
      <path d="M15.500 83V34" stroke="#00f000" />
      <path d="M15.500 34L12.500 53H18.500z" fill="none" stroke="#20f020" />
      <path d="M16 83.500H66" stroke="#f00" />
      <path d="M48 80.500V86.500L67 83.500z" fill="none" stroke="#f01010" />
      <circle cx="15.500" cy="83.500" r="2.500" fill="none" stroke="#0000f0" />
      <path d="M12 83.500h7M15.500 80v7" stroke="#0000f0" />
      <g fill="#fff" fontSize="16">
        <text x="16" y="21">Y</text>
        <text x="16" y="83">Z</text>
        <text x="77" y="83">X</text>
      </g>
    </svg>
  </main>
);

/* ---------- visualization toolbar ---------- */

const Combo = ({ label, value, icon, width }) => (
  <div className={`${width} h-[26px] shrink-0 flex items-center bg-white`}>
    <span className="w-[18px] flex justify-center">{icon}</span>
    <div className="relative grow h-[26px]">
      <select aria-label={label} className="appearance-none w-full h-full pl-[3px] bg-transparent text-[13px] font-['Liberation_Sans']">
        <option>{value}</option>
      </select>
      <span className="pointer-events-none absolute right-0 top-0 w-4 h-[26px] bg-[#f0f0f0] flex items-center justify-center border border-white">
        <span className="border-x-4 border-x-transparent border-t-4 border-t-black" />
      </span>
    </div>
  </div>
);

const VisualTools = () => (
  <div className="flex items-center h-[37px] shrink-0">
    <Grip />
    <ToolButton label="Mesh cleanup">
      <Svg>
        <Splat />
      </Svg>
    </ToolButton>
    <Drop cell="w-[7px]" />
    <div className={`${FRAME} h-[37px] pb-0.5 flex items-center`}>
      <Grip />
      <Combo
        label="Geometry color mode"
        value="Auto"
        width="w-[110px]"
        icon={
          <Svg>
            <g transform="translate(3 1) scale(0.750)">
              <Curved />
            </g>
            <Rainbow x={4} y={19} h={3} />
          </Svg>
        }
      />
      <ToolButton label="Wireframe geometry">
        <Svg>
          <Curved fill="#fafafa" />
        </Svg>
      </ToolButton>
      <Drop />
      <ToolButton label="Shaded geometry">
        <Svg>
          <Curved fill="#6d72b0" />
        </Svg>
      </ToolButton>
      <Drop />
      <ToolButton label="Transparency">
        <Svg>
          <Cube top="#c0c3ea" left="#8f93cc" right="#a9acd6" line="#45486e" />
          <path d="M14 13L20 10V16L14 20z" fill="#d9dbf0" />
        </Svg>
      </ToolButton>
      <Sep />
      <Combo
        label="Element color mode"
        value="By Comp"
        width="w-[116px]"
        icon={
          <Svg>
            <g transform="translate(3 0) scale(0.780)">
              <Cube top="#9da1d3" left="#6a6fae" right="#565b98" grid />
            </g>
            <Rainbow x={4} y={19} h={3} />
          </Svg>
        }
      />
      <ToolButton label="Wireframe elements">
        <Svg>
          <Cube top="#fff" left="#f6f6f6" right="#fff" line="#444" grid />
        </Svg>
      </ToolButton>
      <Drop />
      <ToolButton label="Shaded elements">
        <Svg>
          <Cube top="#9da1d3" left="#6a6fae" right="#565b98" grid />
        </Svg>
      </ToolButton>
      <Drop />
      <ToolButton label="1D elements">
        <Svg>
          <path d="M6 16L19 9" stroke="#444" strokeWidth="2" />
        </Svg>
      </ToolButton>
      <Drop />
      <ToolButton label="2D elements">
        <Svg>
          <path d="M2 12L12 6.500L22 12L12 17.500zM7 9.300L17 14.800M17 9.300L7 14.800" fill="#888" stroke="#333" />
        </Svg>
      </ToolButton>
      <Drop />
      <ToolButton label="Layers">
        <Svg>
          <Slab top="#a9b0ff" side="#3442d8" y={-2} />
        </Svg>
      </ToolButton>
      <Drop />
      <ToolButton label="Shrink elements">
        <Svg>
          <path d="M5 7l5-1v5l-5 1zM14 5l5-1v5l-5 1zM5 15l5-1v5l-5 1zM14 13l5-1v5l-5 1z" fill="#7a7fb8" stroke="#454a80" strokeWidth="0.800" />
        </Svg>
      </ToolButton>
      <ToolButton label="Display settings">
        <Svg>
          <Monitor y={1} />
        </Svg>
      </ToolButton>
      <Grip />
      <ToolButton label="Favorites">
        <Svg>
          <path d="M12 2L15 9L22 9.500L16.700 14.500L18.500 21.500L12 18L5.500 21.500L7.300 14.500L2 9.500L9 9z" fill="#f8cf1c" stroke="#b98a08" />
        </Svg>
      </ToolButton>
    </div>
    <span className="pl-[7px] flex items-center gap-1.5">
      <ArrowLeft size="w-[60px]" />
      <Mark>2</Mark>
    </span>
  </div>
);

const MainPanel = () => (
  <div className="flex mt-[3px] mr-[7px] shrink-0 border-b border-black">
    <div className={`${FRAME} relative flex-1 h-[209px] pt-[21px] pr-[13px] grid grid-cols-[167fr_169fr_160fr_156fr_156fr] items-start`}>
      {PANEL_COLUMNS.map((column) => (
        <div key={column[0]} className="flex flex-col min-w-0">
          {column.map((item) => (
            <button
              key={item}
              className="h-[25px] pl-1 flex items-center justify-center whitespace-nowrap font-['Noto_Sans'] text-[17px] leading-5 text-black border-t border-l border-t-white border-l-white border-b-2 border-r-2 border-b-[#777] border-r-[#777]"
            >
              {item}
            </button>
          ))}
        </div>
      ))}
      <Mark className="absolute left-[568px] top-[115px]">5</Mark>
    </div>
    <div className="w-[68px] shrink-0 flex flex-col items-center border-t border-gray-400">
      <Mark className="mt-[114px]">7</Mark>
      <span className="w-[3px] h-[62px] bg-[#ff4444]" />
      <span className="border-x-[5px] border-x-transparent border-t-[9px] border-t-[#ff4444]" />
    </div>
  </div>
);

const StatusBar = () => (
  <footer className={`${FRAME} h-[26px] shrink-0 mx-px flex text-[13px] leading-5 font-['Liberation_Sans'] text-black`}>
    <span className="grow pl-px border-t border-transparent">Main panel</span>
    <span className="w-[125px] border-l border-t border-black" />
    <span className="w-[127px] border-l border-t border-black pl-px">Model</span>
    <span className="w-[140px] border-l border-t border-black" />
    <span className="w-[139px] border-l border-t border-black pl-[5px] flex items-center gap-1">
      <span className="w-2.5 h-2.5 bg-[#333] border border-black" />
      Gravity_HM
    </span>
  </footer>
);

export default function App() {
  return (
    <div className="h-screen flex flex-col overflow-hidden bg-[#f0f0f0] border-r border-gray-500">
      <MenuBar />
      <div className="flex shrink-0 mt-px pl-0.5">
        <div className={`${FRAME} w-[1052px] h-[68px] shrink-0 flex flex-col justify-between overflow-hidden`}>
          <FileTools />
          <ModelTools />
        </div>
        <Pager />
      </div>
      <div className="flex flex-1 min-h-0 pt-px">
        <aside className="w-[306px] ml-0.5 shrink-0 flex flex-col">
          <SolverBrowser />
          <EntityEditor />
        </aside>
        <div className="flex-1 min-w-0 ml-0.5 mr-[3px] pl-px flex flex-col border-x border-black">
          <div className="flex flex-1 min-h-0 pt-[21px] mr-[7px]">
            <DisplayTools />
            <GraphicsArea />
          </div>
          <VisualTools />
          <MainPanel />
          <div className="h-[3px] shrink-0" />
        </div>
      </div>
      <StatusBar />
    </div>
  );
}
